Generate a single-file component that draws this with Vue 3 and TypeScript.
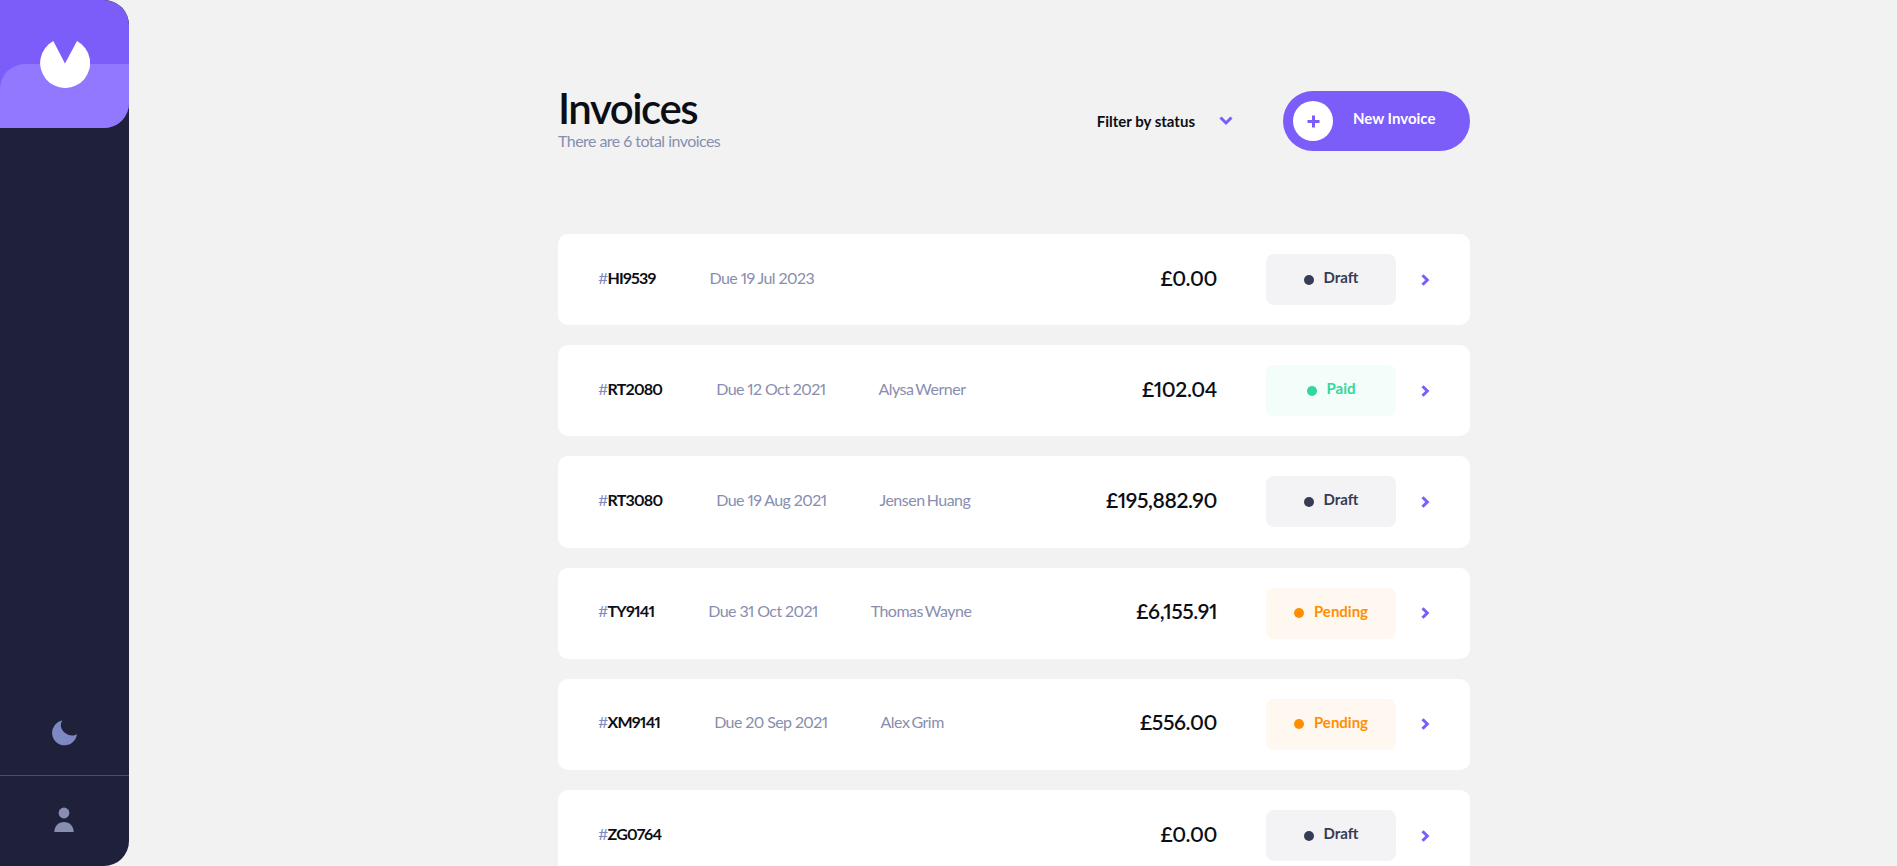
<script setup lang="ts">
type Status = 'draft' | 'paid' | 'pending'

interface Invoice {
  id: string
  due: string
  client: string
  total: string
  status: Status
}

const invoices: Invoice[] = [
  { id: 'HI9539', due: 'Due 19 Jul 2023', client: '', total: '£0.00', status: 'draft' },
  { id: 'RT2080', due: 'Due 12 Oct 2021', client: 'Alysa Werner', total: '£102.04', status: 'paid' },
  { id: 'RT3080', due: 'Due 19 Aug 2021', client: 'Jensen Huang', total: '£195,882.90', status: 'draft' },
  { id: 'TY9141', due: 'Due 31 Oct 2021', client: 'Thomas Wayne', total: '£6,155.91', status: 'pending' },
  { id: 'XM9141', due: 'Due 20 Sep 2021', client: 'Alex Grim', total: '£556.00', status: 'pending' },
  { id: 'ZG0764', due: '', client: '', total: '£0.00', status: 'draft' }
]

const statusLabels: Record<Status, string> = {
  draft: 'Draft',
  paid: 'Paid',
  pending: 'Pending'
}
</script>

<template>
  <div class="app">
    <aside class="sidebar">
      <div class="logo">
        <div class="logo-light"></div>
        <svg class="logo-mark" width="50" height="50" viewBox="0 0 50 50">
          <path d="M25 25.500 L13.300 3 A25 25 0 1 0 37 3 Z" fill="#fff" />
        </svg>
      </div>
      <div class="sidebar-bottom">
        <button class="theme-btn" type="button" aria-label="Toggle theme">
          <svg width="26" height="26" viewBox="0 0 26 26">
            <path d="M10.500 0.500A12.500 12.500 0 1 0 25 14C23.500 15 21.800 15.500 20 15.500C14.500 15.500 10 11 9 7C8.500 4.500 9.200 2 10.500 0.500Z" fill="#7e88c3" />
          </svg>
        </button>
        <div class="avatar">
          <svg width="20" height="26" viewBox="0 0 20 26">
            <circle cx="10" cy="6" r="5.400" fill="#888eb0" />
            <path d="M0.300 25C0.300 19 4.600 15 10 15s9.700 4 9.700 10z" fill="#888eb0" />
          </svg>
        </div>
      </div>
    </aside>

    <main class="main">
      <header class="header">
        <div class="title-block">
          <h1 class="title">Invoices</h1>
          <p class="subtitle">There are 6 total invoices</p>
        </div>
        <button class="filter" type="button">
          <span class="filter-label">Filter by status</span>
          <svg width="14" height="10" viewBox="0 0 14 10">
            <path d="M1.500 1.500 L7 7 L12.500 1.500" fill="none" stroke="#7c5dfa" stroke-width="3" />
          </svg>
        </button>
        <button class="new-btn" type="button">
          <span class="new-circle">
            <svg width="13" height="13" viewBox="0 0 13 13">
              <path d="M6.500 0.500v12M0.500 6.500h12" fill="none" stroke="#7c5dfa" stroke-width="3" />
            </svg>
          </span>
          <span class="new-label">New Invoice</span>
        </button>
      </header>

      <ul class="list">
        <li v-for="inv in invoices" :key="inv.id" class="row">
          <span class="id"><span class="hash">#</span>{{ inv.id }}</span>
          <span v-if="inv.due" class="due">{{ inv.due }}</span>
          <span v-if="inv.client" class="client">{{ inv.client }}</span>
          <span class="total">{{ inv.total }}</span>
          <span class="status" :class="inv.status">
            <span class="dot"></span>
            <span class="status-label">{{ statusLabels[inv.status] }}</span>
          </span>
          <svg class="chevron" width="9" height="12" viewBox="0 0 9 12">
            <path d="M1.500 1.200 L6.300 6 L1.500 10.800" fill="none" stroke="#7c5dfa" stroke-width="3" />
          </svg>
        </li>
      </ul>
    </main>
  </div>
</template>

<style>
html,
body {
  margin: 0;
  background: #f2f2f2;
  overflow: hidden;
}
</style>

<style scoped>
.app {
  display: flex;
  height: 100vh;
  overflow: hidden;
  font-family: Lato, "Noto Sans", sans-serif;
  font-variant-numeric: proportional-nums;
}

.sidebar {
  width: 129px;
  flex: none;
  display: flex;
  flex-direction: column;
  justify-content: space-between;
  background: #1e2139;
  border-radius: 0 25px 25px 0;
  overflow: hidden;
}

.logo {
  position: relative;
  height: 128px;
  background: #7c5dfa;
  border-radius: 0 25px 25px 0;
  overflow: hidden;
}

.logo-light {
  position: absolute;
  left: 0;
  right: 0;
  bottom: 0;
  height: 64px;
  background: #9277ff;
  border-radius: 25px 0 0 0;
}

.logo-mark {
  position: absolute;
  left: 40px;
  top: 38px;
}

.sidebar-bottom {
  display: flex;
  flex-direction: column;
}

.theme-btn {
  display: flex;
  justify-content: center;
  align-items: center;
  height: 86px;
  padding: 0;
  border: 0;
  background: none;
  border-bottom: 1px solid #494e6e;
}

.avatar {
  display: flex;
  justify-content: center;
  align-items: flex-start;
  height: 90px;
  padding: 31px 1px 0 0;
  box-sizing: border-box;
}

.main {
  flex: 1;
  min-width: 0;
  padding: 91px 0 0 429px;
}

.header {
  display: flex;
  align-items: center;
  width: 912px;
  height: 60px;
  margin-bottom: 83px;
}

.title-block {
  margin-right: auto;
  padding-bottom: 3px;
}

.title {
  margin: 0 0 3px;
  font-size: 42px;
  font-weight: 600;
  line-height: 40px;
  letter-spacing: -1.5px;
  color: #0c0e16;
}

.subtitle {
  margin: 0;
  font-size: 16px;
  line-height: 20px;
  letter-spacing: -0.55px;
  color: #888eb0;
}

.filter {
  display: flex;
  align-items: center;
  gap: 24px;
  margin-right: 50px;
  padding: 0;
  border: 0;
  background: none;
  font: inherit;
  font-size: 15px;
  font-weight: 700;
  color: #0c0e16;
}

.filter-label {
  padding-bottom: 1px;
}

.new-btn {
  display: flex;
  align-items: center;
  width: 187px;
  height: 60px;
  padding: 0 0 0 10px;
  border: 0;
  border-radius: 30px;
  background: #7c5dfa;
  font: inherit;
  color: #fff;
}

.new-circle {
  display: flex;
  justify-content: center;
  align-items: center;
  width: 40px;
  height: 40px;
  border-radius: 50%;
  background: #fff;
}

.new-label {
  margin-left: 20px;
  padding-bottom: 6px;
  font-size: 15px;
  font-weight: 700;
}

.list {
  display: flex;
  flex-direction: column;
  gap: 20px;
  width: 912px;
  margin: 0;
  padding: 0;
  list-style: none;
}

.row {
  display: flex;
  align-items: center;
  flex: none;
  height: 91.2px;
  box-sizing: border-box;
  padding: 0 40px;
  border-radius: 10px;
  background: #fff;
  font-size: 16px;
}

.id,
.due,
.client,
.total {
  padding-bottom: 5px;
}

.id {
  font-weight: 700;
  letter-spacing: -0.8px;
  color: #0c0e16;
}

.hash {
  font-weight: 400;
  color: #7e88c3;
}

.due {
  margin-left: 54px;
  letter-spacing: -0.6px;
  color: #888eb0;
}

.client {
  margin-left: 53px;
  letter-spacing: -0.5px;
  word-spacing: -1.5px;
  color: #888eb0;
}

.total {
  margin-left: auto;
  font-size: 21px;
  font-weight: 600;
  letter-spacing: -0.4px;
  color: #0c0e16;
}

.status {
  display: flex;
  justify-content: center;
  align-items: center;
  gap: 10px;
  width: 130px;
  height: 51px;
  margin-left: 49px;
  border-radius: 8px;
  font-size: 15px;
  font-weight: 700;
}

.status-label {
  padding-bottom: 5px;
}

.dot {
  width: 10px;
  height: 10px;
  border-radius: 50%;
  background: currentColor;
}

.status.draft {
  background: #f3f3f5;
  color: #373b53;
}

.status.paid {
  background: #f3fdf9;
  color: #33d69f;
}

.status.pending {
  background: #fff8f0;
  color: #ff8f00;
}

.chevron {
  margin-left: 25px;
}
</style>
